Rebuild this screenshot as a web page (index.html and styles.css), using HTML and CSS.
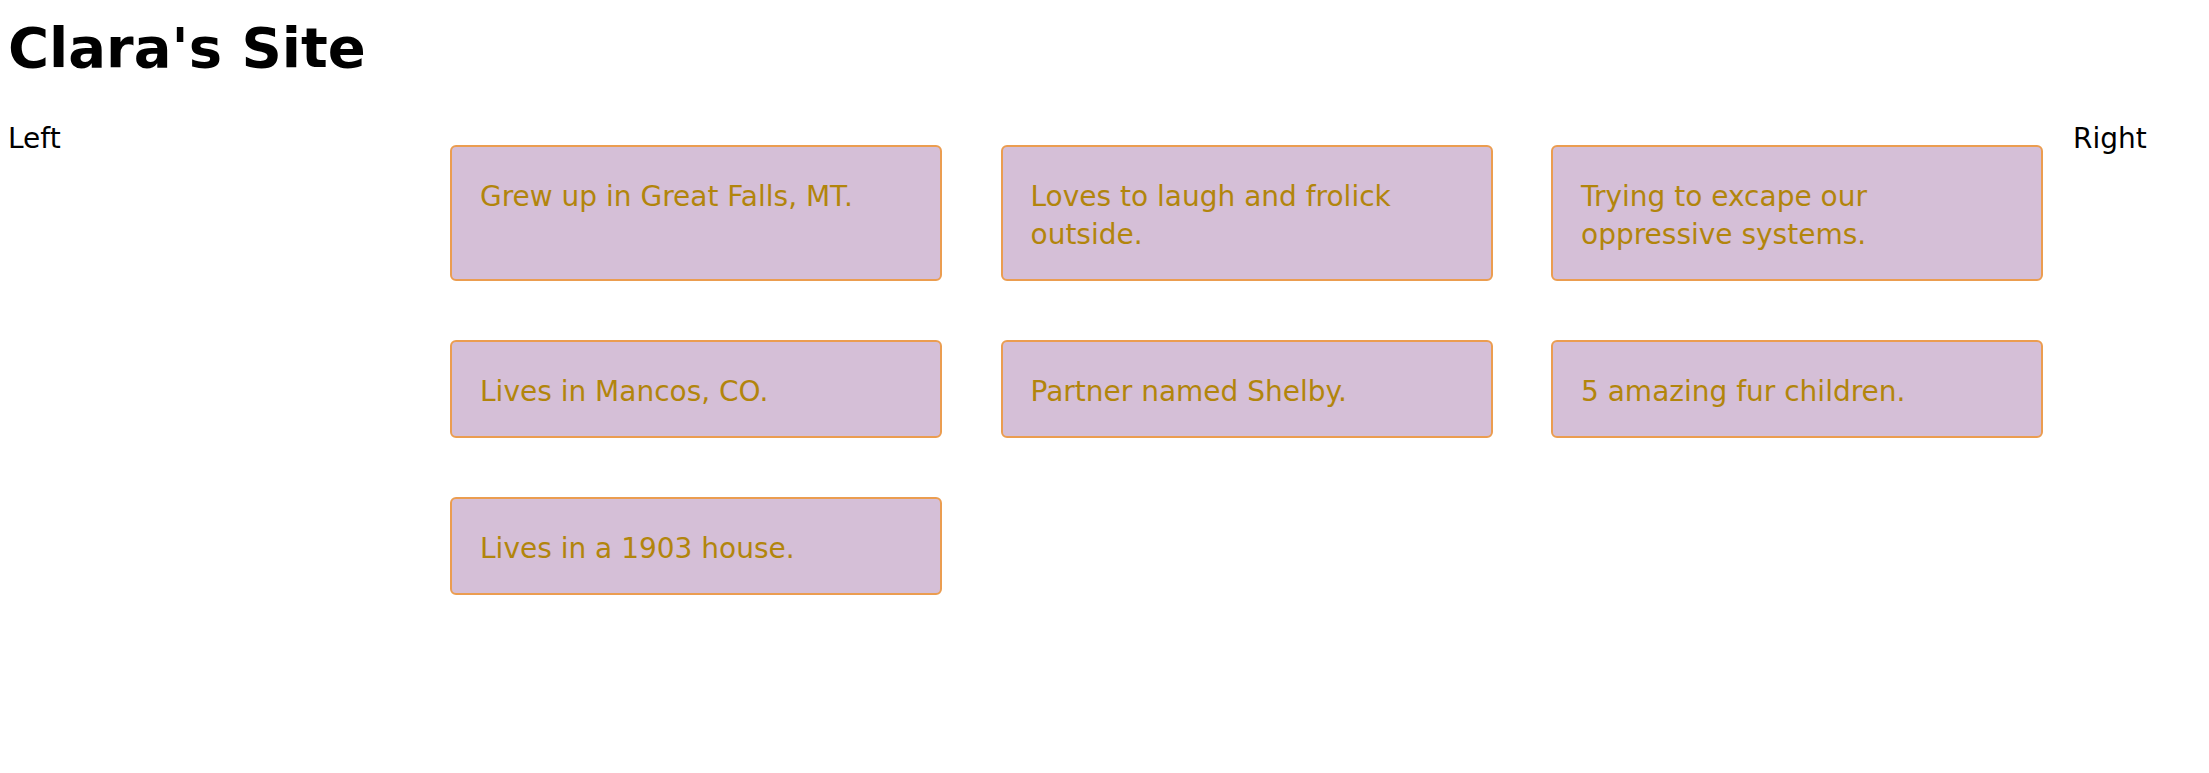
FILE: index.html
```html
<!DOCTYPE html>
<html lang="en">
<head>
<meta charset="utf-8">
<title>Clara's Site</title>
<link rel="stylesheet" href="styles.css">
</head>
<body>
  <div class="page">
    <h1 class="title">Clara's Site</h1>
    <div class="layout">
      <div class="side side-left">Left</div>
      <main class="main">
        <div class="cards">
          <div class="card">Grew up in Great Falls, MT.</div>
          <div class="card">Loves to laugh and frolick outside.</div>
          <div class="card">Trying to excape our oppressive systems.</div>
          <div class="card">Lives in Mancos, CO.</div>
          <div class="card">Partner named Shelby.</div>
          <div class="card">5 amazing fur children.</div>
          <div class="card">Lives in a 1903 house.</div>
        </div>
      </main>
      <div class="side side-right">Right</div>
    </div>
  </div>
</body>
</html>
```

FILE: styles.css
```css
html, body {
  margin: 0;
  padding: 0;
  background: #ffffff;
}

body {
  font-family: "DejaVu Sans", Verdana, sans-serif;
  color: #000000;
}

.page {
  padding: 16px 8px 0 8px;
}

.title {
  margin: 0;
  font-size: 56px;
  font-weight: bold;
  line-height: 64px;
}

.layout {
  display: grid;
  grid-template-columns: 442px 1fr 128px;
  margin-top: 40px;
}

.side {
  font-size: 28px;
  line-height: 38px;
}

.main {
  padding: 25px 30px 0 0;
}

.cards {
  display: grid;
  grid-template-columns: repeat(3, 1fr);
  column-gap: 58.5px;
  row-gap: 59px;
}

.card {
  background: #d5bfd7;
  border: 2px solid #eb9d50;
  border-radius: 6px;
  padding: 31px 28px 25px 28px;
  color: #b2850c;
  font-size: 28px;
  line-height: 38px;
}
```
